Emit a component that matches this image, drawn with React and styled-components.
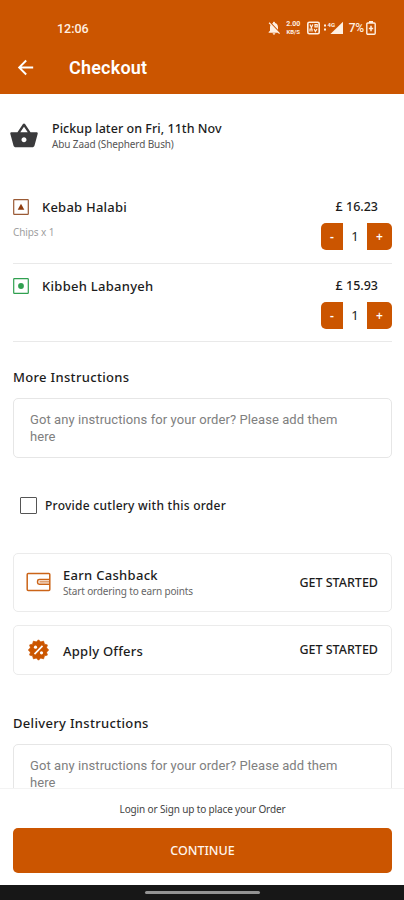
import React from "react";
import styled, { createGlobalStyle } from "styled-components";
import { MdArrowBack, MdShoppingBasket } from "react-icons/md";

const GlobalStyle = createGlobalStyle`
    * {
        box-sizing: border-box;
    }

    body {
        margin: 0;
        background: #ffffff;
        font-family: "Noto Sans", "Open Sans", sans-serif;
        color: #1c1c1c;
    }

    svg {
        display: block;
        flex: none;
    }
`;

const Screen = styled.div`
    display: flex;
    flex-direction: column;
    width: 404px;
    height: 900px;
    overflow: hidden;
    background: #ffffff;
`;

const Header = styled.header`
    flex: none;
    height: 94px;
    padding-top: 18px;
    color: #ffffff;
    background: #cb5500;
    font-family: Roboto, sans-serif;
`;

const StatusBar = styled.div`
    display: flex;
    align-items: center;
    height: 20px;
    padding: 0 28px 0 57px;
    color: #fff0e2;
`;

const Clock = styled.span`
    margin-right: auto;
    font-size: 12.5px;
    font-weight: 500;
`;

const NetSpeed = styled.span`
    display: grid;
    grid-template-rows: 7px 7px;
    width: 17px;
    margin: 0 5px 0 3px;
    font-size: 7px;
    font-weight: 700;
    line-height: 7px;
    text-align: center;

    small {
        font-size: 6px;
    }
`;

const Battery = styled.span`
    margin: 0 2px 0 6px;
    font-size: 12px;
    font-weight: 500;
    letter-spacing: -0.2px;
`;

const TitleBar = styled.div`
    display: flex;
    align-items: center;
    height: 58px;
    padding-left: 14px;
`;

const Title = styled.h1`
    margin: 0 0 0 32px;
    font-size: 18px;
    font-weight: 600;
    letter-spacing: 0.2px;
`;

const Content = styled.main`
    flex: 1;
    min-height: 0;
    overflow: hidden;
    padding: 0 12px 0 13px;
`;

const Pickup = styled.section`
    display: flex;
    align-items: center;
    height: 83px;
    margin: 0 0 2px -4px;
    gap: 13px;
    color: #3a3a3c;
`;

const Label = styled.div`
    font-size: ${(p) => p.$size || 13}px;
    font-weight: ${(p) => p.$weight || 500};
    line-height: ${(p) => p.$line || 16}px;
    letter-spacing: ${(p) => p.$spacing || 0}px;
    color: ${(p) => p.$color || "#1c1c1c"};
    white-space: nowrap;
`;

const Item = styled.section`
    display: flex;
    justify-content: space-between;
    height: ${(p) => p.$height}px;
    padding-top: ${(p) => p.$top}px;
    border-bottom: 1px solid #e9e9e9;
`;

const ItemName = styled.div`
    display: flex;
    align-items: center;
    gap: 13px;
    height: 16px;
    margin-bottom: 9px;
`;

const ItemSide = styled.div`
    display: flex;
    flex-direction: column;
    align-items: flex-end;
`;

const Price = styled(Label)`
    margin: 0 14px 8px 0;
`;

const Stepper = styled.div`
    display: flex;
    align-items: center;
    width: 71px;
    height: 27px;
    overflow: hidden;
    border-radius: 5px;
`;

const StepButton = styled.button`
    width: ${(p) => p.$width}px;
    height: 27px;
    padding: 0;
    border: 0;
    color: #ffffff;
    background: #cb5500;
    font: 600 12px/27px "Noto Sans", sans-serif;
`;

const Quantity = styled.span`
    flex: 1;
    font-size: 13px;
    line-height: 27px;
    text-align: center;
`;

const SectionTitle = styled.h2`
    margin: 0 0 13px;
    padding-top: 27px;
    font-size: 13px;
    font-weight: 500;
    line-height: 16px;
    letter-spacing: 0.32px;
`;

const Instructions = styled.div`
    height: 60px;
    padding: 12px 40px 0 16px;
    border: 1px solid #e6e6e6;
    border-radius: 5px;
    color: #808080;
    font-family: Roboto, sans-serif;
    font-size: 13px;
    line-height: 17px;
    letter-spacing: 0.08px;
`;

const Cutlery = styled.label`
    display: flex;
    align-items: center;
    height: 95px;
    padding-left: 7px;
    gap: 8px;
`;

const CheckBox = styled.span`
    width: 17px;
    height: 17px;
    border: 1px solid #555555;
    border-radius: 1px;
`;

const Card = styled.section`
    display: flex;
    align-items: center;
    height: ${(p) => p.$height}px;
    margin-bottom: 13px;
    padding: 0 13px 0 12px;
    border: 1px solid #ebebeb;
    border-radius: 5px;
`;

const CardText = styled.div`
    flex: 1;
    margin-left: 12px;
    padding-top: 1px;
`;

const Footer = styled.footer`
    flex: none;
    height: 97px;
    padding: 12px 12px 0 13px;
    border-top: 1px solid #f3f3f3;
    text-align: center;
`;

const Continue = styled.button`
    display: block;
    width: 100%;
    height: 45px;
    margin-top: 11px;
    padding: 0;
    border: 0;
    border-radius: 5px;
    color: #fff6ee;
    background: #cb5500;
    font: 500 12.5px/45px "Noto Sans", sans-serif;
`;

const NavBar = styled.div`
    display: flex;
    flex: none;
    justify-content: center;
    height: 15px;
    padding-top: 6px;
    background: #171717;

    &::before {
        content: "";
        width: 115px;
        height: 3px;
        border-radius: 2px;
        background: #939393;
    }
`;

function BellOffIcon() {
    return (
        <svg width="16" height="16" viewBox="0 0 24 24" fill="currentColor">
            <path d="M20 18.69L7.84 6.14 5.27 3.49 4 4.76l2.8 2.8v.01c-.52.99-.8 2.16-.8 3.42v5l-2 2v1h13.73l2 2L21 19.72l-1-1.03zM12 22c1.11 0 2-.89 2-2h-4c0 1.11.89 2 2 2zM18 14.68V11c0-3.08-1.64-5.64-4.5-6.32V4c0-.83-.67-1.5-1.5-1.5s-1.5.67-1.5 1.5v.68c-.5.12-.97.3-1.42.55L18 14.68z" />
        </svg>
    );
}

function SignalIcons() {
    return (
        <svg width="36" height="14" viewBox="0 0 36 14" fill="currentColor">
            <rect x="0.8" y="1.3" width="11.4" height="11.4" rx="1.5" fill="none" stroke="currentColor" strokeWidth="1.6" />
            <path d="M3 3.5l1.4 3 1.4-3M8 3.6h2.2v2.2H8zM3 10.4V8h2v2.4M7.2 8l1.2 2.6L10 8" fill="none" stroke="currentColor" strokeWidth="1.2" />
            <path d="M17 3.5h2v2h-2zM17 7.5h2v2h-2z" />
            <path d="M36 0.8V13H23.4z" />
            <text x="20.5" y="5.8" fontSize="6" fontWeight="700">4G</text>
        </svg>
    );
}

function BatteryIcon() {
    return (
        <svg width="10" height="14" viewBox="0 0 10 14" fill="currentColor">
            <path d="M3 0h4v2H3z" />
            <rect x="0.8" y="2" width="8.4" height="11.2" rx="1" fill="none" stroke="currentColor" strokeWidth="1.4" />
            <path d="M5 4.8v5.4M2.8 7.5h4.4" stroke="currentColor" strokeWidth="1.5" />
        </svg>
    );
}

function FoodMark({ veg }) {
    const color = veg ? "#30a050" : "#9a5a35";
    return (
        <svg width="16" height="16" viewBox="0 0 16 16">
            <rect x="0.7" y="0.7" width="14.6" height="14.6" rx="0.6" fill="none" stroke={color} strokeWidth="1.2" />
            {veg ? <circle cx="8" cy="8" r="2.9" fill={color} /> : <path d="M8 4.7l3.3 6H4.7z" fill="#8f3d10" />}
        </svg>
    );
}

function WalletIcon() {
    return (
        <svg width="25" height="22" viewBox="0 0 25 22" fill="none" stroke="#cb6418" strokeWidth="1.5">
            <rect x="1.2" y="1.4" width="22.6" height="17.2" rx="1" />
            <path d="M23.8 7.6H13.2c-1 0-1.6 0.6-1.6 1.4v1.8c0 0.9 0.6 1.4 1.6 1.4h10.6" />
            <path d="M13.5 9.9H23" strokeWidth="1" />
        </svg>
    );
}

function OfferIcon() {
    // twelve-pointed seal
    const points = Array.from({ length: 24 }, (_, i) => {
        const r = i % 2 ? 8.3 : 10.2;
        const a = (i * Math.PI) / 12;
        return `${(12.5 + r * Math.sin(a)).toFixed(2)},${(11 - r * Math.cos(a)).toFixed(2)}`;
    }).join(" ");
    return (
        <svg width="25" height="22" viewBox="0 0 25 22">
            <polygon points={points} fill="#cb5500" stroke="#cb5500" strokeLinejoin="round" strokeWidth="0.8" />
            <path d="M16.5 6.9l-8 8.2" stroke="#ffffff" strokeWidth="1.7" />
            <circle cx="9.5" cy="8.2" r="1.6" fill="#ffffff" />
            <circle cx="15.5" cy="13.8" r="1.6" fill="#ffffff" />
        </svg>
    );
}

function OrderItem({ name, spacing, price, veg, extra, height, top }) {
    return (
        <Item $height={height} $top={top}>
            <div>
                <ItemName>
                    <FoodMark veg={veg} />
                    <Label $spacing={spacing}>{name}</Label>
                </ItemName>
                {extra && <Label $size={10} $weight={400} $color="#a0a0a0" $spacing={-0.1}>{extra}</Label>}
            </div>
            <ItemSide>
                <Price $size={12.5}>{price}</Price>
                <Stepper>
                    <StepButton $width={22}>-</StepButton>
                    <Quantity>1</Quantity>
                    <StepButton $width={25}>+</StepButton>
                </Stepper>
            </ItemSide>
        </Item>
    );
}

export default function App() {
    return (
        <Screen>
            <GlobalStyle />
            <Header>
                <StatusBar>
                    <Clock>12:06</Clock>
                    <BellOffIcon />
                    <NetSpeed>
                        <span>2.00</span>
                        <small>KB/S</small>
                    </NetSpeed>
                    <SignalIcons />
                    <Battery>7%</Battery>
                    <BatteryIcon />
                </StatusBar>
                <TitleBar>
                    <MdArrowBack size={23} />
                    <Title>Checkout</Title>
                </TitleBar>
            </Header>

            <Content>
                <Pickup>
                    <MdShoppingBasket size={30} />
                    <div>
                        <Label $size={12.5} $spacing={0.04}>Pickup later on Fri, 11th Nov</Label>
                        <Label $size={10} $weight={400} $line={14} $color="#555555" $spacing={-0.12}>Abu Zaad (Shepherd Bush)</Label>
                    </div>
                </Pickup>

                <OrderItem name="Kebab Halabi" spacing={0.22} price="£ 16.23" extra="Chips x 1" height={85} top={20} />
                <OrderItem name="Kibbeh Labanyeh" spacing={0.28} price="£ 15.93" veg height={78} top={14} />

                <SectionTitle>More Instructions</SectionTitle>
                <Instructions>Got any instructions for your order? Please add them here</Instructions>

                <Cutlery>
                    <CheckBox />
                    <Label $size={12} $spacing={0.26}>Provide cutlery with this order</Label>
                </Cutlery>

                <Card $height={59}>
                    <WalletIcon />
                    <CardText>
                        <Label $spacing={0.3}>Earn Cashback</Label>
                        <Label $size={10} $weight={400} $color="#666666" $spacing={-0.15}>Start ordering to earn points</Label>
                    </CardText>
                    <Label $size={12.5}>GET STARTED</Label>
                </Card>
                <Card $height={50}>
                    <OfferIcon />
                    <CardText>
                        <Label $spacing={0.25}>Apply Offers</Label>
                    </CardText>
                    <Label $size={12.5}>GET STARTED</Label>
                </Card>

                <SectionTitle>Delivery Instructions</SectionTitle>
                <Instructions>Got any instructions for your order? Please add them here</Instructions>
            </Content>

            <Footer>
                <Label $size={10} $weight={400} $color="#444444" $spacing={-0.14}>Login or Sign up to place your Order</Label>
                <Continue>CONTINUE</Continue>
            </Footer>
            <NavBar />
        </Screen>
    );
}
